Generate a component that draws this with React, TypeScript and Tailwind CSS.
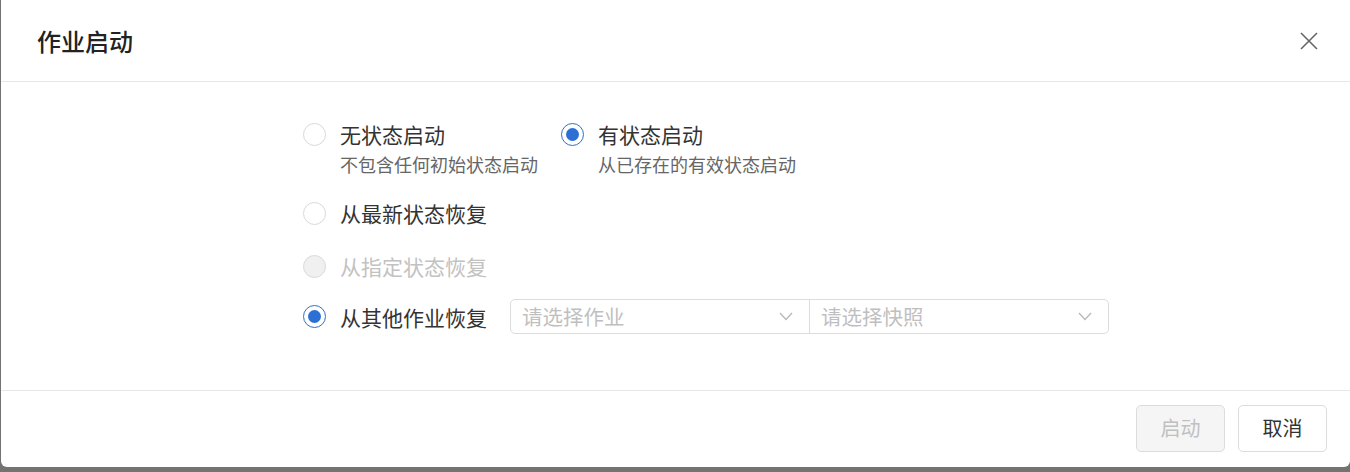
import React from "react";

const FONT = { fontFamily: '"PingFang SC", "Noto Sans CJK SC", "Noto Sans", sans-serif' };

function Radio({ checked, disabled }: { checked?: boolean; disabled?: boolean }) {
  if (checked) {
    return (
      <span className="flex h-[23px] w-[23px] shrink-0 items-center justify-center rounded-full border-[1.5px] border-[#2d6fd2] bg-white">
        <span className="h-[13px] w-[13px] rounded-full bg-[#2d6fd2]" />
      </span>
    );
  }
  return (
    <span
      className={
        "block h-[23px] w-[23px] shrink-0 rounded-full border-[1.5px] border-[#d9d9d9] " +
        (disabled ? "bg-[#f0f0f0]" : "bg-white")
      }
    />
  );
}

function Chevron() {
  return (
    <svg width="14" height="9" viewBox="0 0 14 9" fill="none" className="shrink-0">
      <path d="M1 1l6 6.5L13 1" stroke="#b8b8b8" strokeWidth="1.3" />
    </svg>
  );
}

export default function App() {
  return (
    <div className="h-[472px] w-[1350px] overflow-hidden bg-[#737373] pl-px" style={FONT}>
      <div className="flex h-[467px] flex-col rounded-b-[6px] bg-white">
        <div className="flex h-[82px] shrink-0 items-center justify-between border-b border-[#e8e8e8] pl-[36px] pr-[32px]">
          <div className="text-[24px] font-medium leading-none text-[#222]">作业启动</div>
          <svg width="18" height="18" viewBox="0 0 18 18" fill="none">
            <path d="M1 1l16 16M17 1L1 17" stroke="#666" strokeWidth="1.6" />
          </svg>
        </div>

        <div className="flex-1 pl-[302px] pt-[37px]">
          <div className="flex">
            <div className="flex w-[258px] items-start">
              <div className="flex h-[30px] items-center">
                <Radio />
              </div>
              <div className="ml-[14px]">
                <div className="text-[21px] leading-[30px] text-[#333]">无状态启动</div>
                <div className="text-[18px] leading-[30px] text-[#666]">不包含任何初始状态启动</div>
              </div>
            </div>
            <div className="flex items-start">
              <div className="flex h-[30px] items-center">
                <Radio checked />
              </div>
              <div className="ml-[14px]">
                <div className="text-[21px] leading-[30px] text-[#333]">有状态启动</div>
                <div className="text-[18px] leading-[30px] text-[#666]">从已存在的有效状态启动</div>
              </div>
            </div>
          </div>

          <div className="mt-[19px] flex h-[30px] items-center">
            <Radio />
            <span className="ml-[14px] text-[21px] leading-[30px] text-[#333]">从最新状态恢复</span>
          </div>

          <div className="mt-[23px] flex h-[30px] items-center">
            <Radio disabled />
            <span className="ml-[14px] text-[21px] leading-[30px] text-[#c2c2c2]">从指定状态恢复</span>
          </div>

          <div className="mt-[18px] flex h-[35px] items-center">
            <Radio checked />
            <span className="ml-[14px] text-[21px] leading-[30px] text-[#333]">从其他作业恢复</span>
            <div className="ml-[23px] flex h-[35px] w-[599px] rounded-[5px] border border-[#dcdcdc]">
              <div className="flex flex-1 items-center justify-between border-r border-[#dcdcdc] pl-[11px] pr-[16px]">
                <span className="text-[20.5px] text-[#bfbfbf]">请选择作业</span>
                <Chevron />
              </div>
              <div className="flex flex-1 items-center justify-between pl-[11px] pr-[16px]">
                <span className="text-[20.5px] text-[#bfbfbf]">请选择快照</span>
                <Chevron />
              </div>
            </div>
          </div>
        </div>

        <div className="flex h-[77px] shrink-0 items-center justify-end gap-[13px] border-t border-[#e8e8e8] pb-[2px] pr-[23px]">
          <button className="flex h-[47px] w-[89px] items-center justify-center rounded-[5px] border border-[#dcdcdc] bg-[#f5f5f5] text-[20px] text-[#c0c0c0]">
            启动
          </button>
          <button className="flex h-[47px] w-[89px] items-center justify-center rounded-[5px] border border-[#dcdcdc] bg-white text-[20px] text-[#333]">
            取消
          </button>
        </div>
      </div>
    </div>
  );
}
